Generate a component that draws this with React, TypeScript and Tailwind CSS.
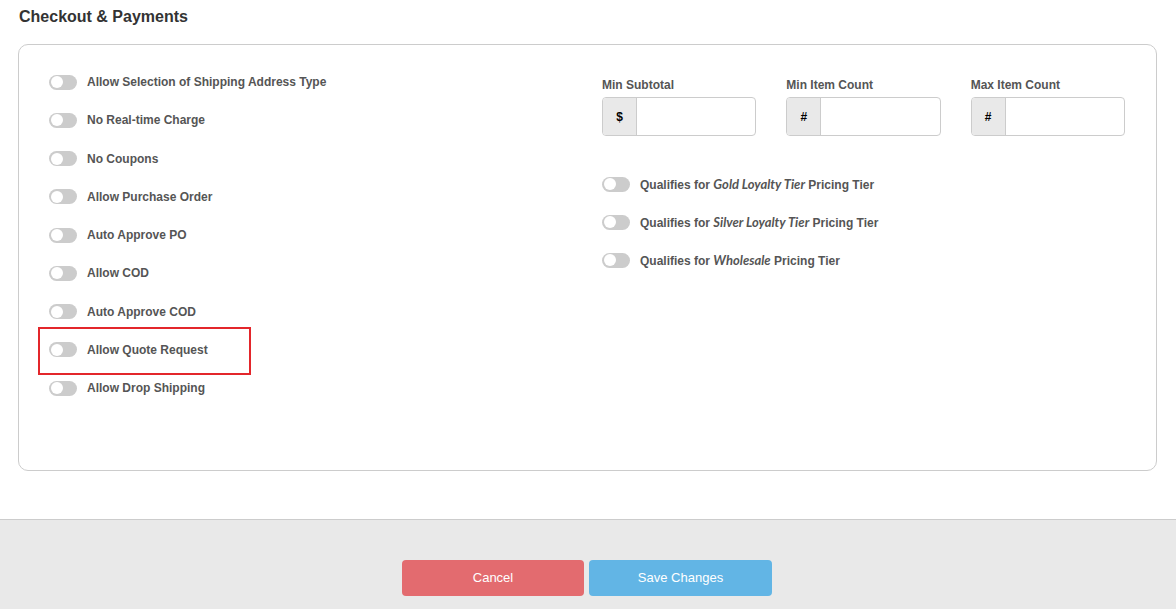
import React from "react";

function Toggle() {
  return (
    <div className="w-[28px] h-[15px] rounded-full bg-[#cccccc] relative shrink-0">
      <div className="absolute left-[2px] top-[1.5px] w-[12px] h-[12px] rounded-full bg-white" />
    </div>
  );
}

function ToggleRow({ children, highlight }: { children: React.ReactNode; highlight?: boolean }) {
  return (
    <div className="relative h-[38.25px] flex items-center gap-[10px]">
      <Toggle />
      <span className="text-[12px] font-bold text-[#555555] leading-none">{children}</span>
      {highlight && (
        <div className="absolute left-[-11px] top-[-4px] w-[213px] h-[48px] border-2 border-[#e3262b]" />
      )}
    </div>
  );
}

function InputGroup({ label, addon }: { label: string; addon: string }) {
  return (
    <div className="flex flex-col">
      <div className="text-[12px] font-bold text-[#555555] leading-[14px] mt-[15px] mb-[5px]">{label}</div>
      <div className="flex h-[39px] border border-[#cccccc] rounded-[4px] overflow-hidden bg-white">
        <div className="w-[34px] bg-[#e9e9e9] border-r border-[#cccccc] flex items-center justify-center text-[12px] font-bold text-black">
          {addon}
        </div>
        <div className="flex-1" />
      </div>
    </div>
  );
}

function Tier({ name }: { name: string }) {
  return (
    <>
      Qualifies for{" "}
      <span className="italic text-[13px]" style={{ fontFamily: "Lato, sans-serif" }}>{name}</span> Pricing Tier
    </>
  );
}

export default function App() {
  return (
    <div className="w-[1176px] h-[609px] bg-white flex flex-col" style={{ fontFamily: '"Liberation Sans", Arial, sans-serif' }}>
      <div className="pl-[18px] pr-[19px]">
        <h1 className="pl-[1px] pt-[7px] text-[16px] leading-[20px] font-bold text-[#333333]">Checkout &amp; Payments</h1>
        <div className="mt-[17px] h-[427px] border border-[#cccccc] rounded-[10px] pt-[18px] pl-[30px] pr-[31px]">
          <div className="grid grid-cols-2 gap-[30px]">
            <div className="flex flex-col">
              <ToggleRow>Allow Selection of Shipping Address Type</ToggleRow>
              <ToggleRow>No Real-time Charge</ToggleRow>
              <ToggleRow>No Coupons</ToggleRow>
              <ToggleRow>Allow Purchase Order</ToggleRow>
              <ToggleRow>Auto Approve PO</ToggleRow>
              <ToggleRow>Allow COD</ToggleRow>
              <ToggleRow>Auto Approve COD</ToggleRow>
              <ToggleRow highlight>Allow Quote Request</ToggleRow>
              <ToggleRow>Allow Drop Shipping</ToggleRow>
            </div>
            <div className="flex flex-col">
              <div className="grid grid-cols-3 gap-[30px]">
                <InputGroup label="Min Subtotal" addon="$" />
                <InputGroup label="Min Item Count" addon="#" />
                <InputGroup label="Max Item Count" addon="#" />
              </div>
              <div className="mt-[29px] flex flex-col">
                <div className="h-[38px] flex items-center gap-[10px]">
                  <Toggle />
                  <span className="text-[12px] font-bold text-[#555555] leading-none"><Tier name="Gold Loyalty Tier" /></span>
                </div>
                <div className="h-[38px] flex items-center gap-[10px]">
                  <Toggle />
                  <span className="text-[12px] font-bold text-[#555555] leading-none"><Tier name="Silver Loyalty Tier" /></span>
                </div>
                <div className="h-[38px] flex items-center gap-[10px]">
                  <Toggle />
                  <span className="text-[12px] font-bold text-[#555555] leading-none"><Tier name="Wholesale" /></span>
                </div>
              </div>
            </div>
          </div>
        </div>
      </div>
      <div className="mt-[48px] flex-1 bg-[#e9e9e9] border-t border-[#cccccc] flex justify-center items-start pt-[40px] pr-[2px] gap-[5px]">
        <button className="w-[182px] h-[36px] rounded-[4px] bg-[#e36b6f] text-white text-[13px]">Cancel</button>
        <button className="w-[183px] h-[36px] rounded-[4px] bg-[#62b5e5] text-white text-[13px]">Save Changes</button>
      </div>
    </div>
  );
}
